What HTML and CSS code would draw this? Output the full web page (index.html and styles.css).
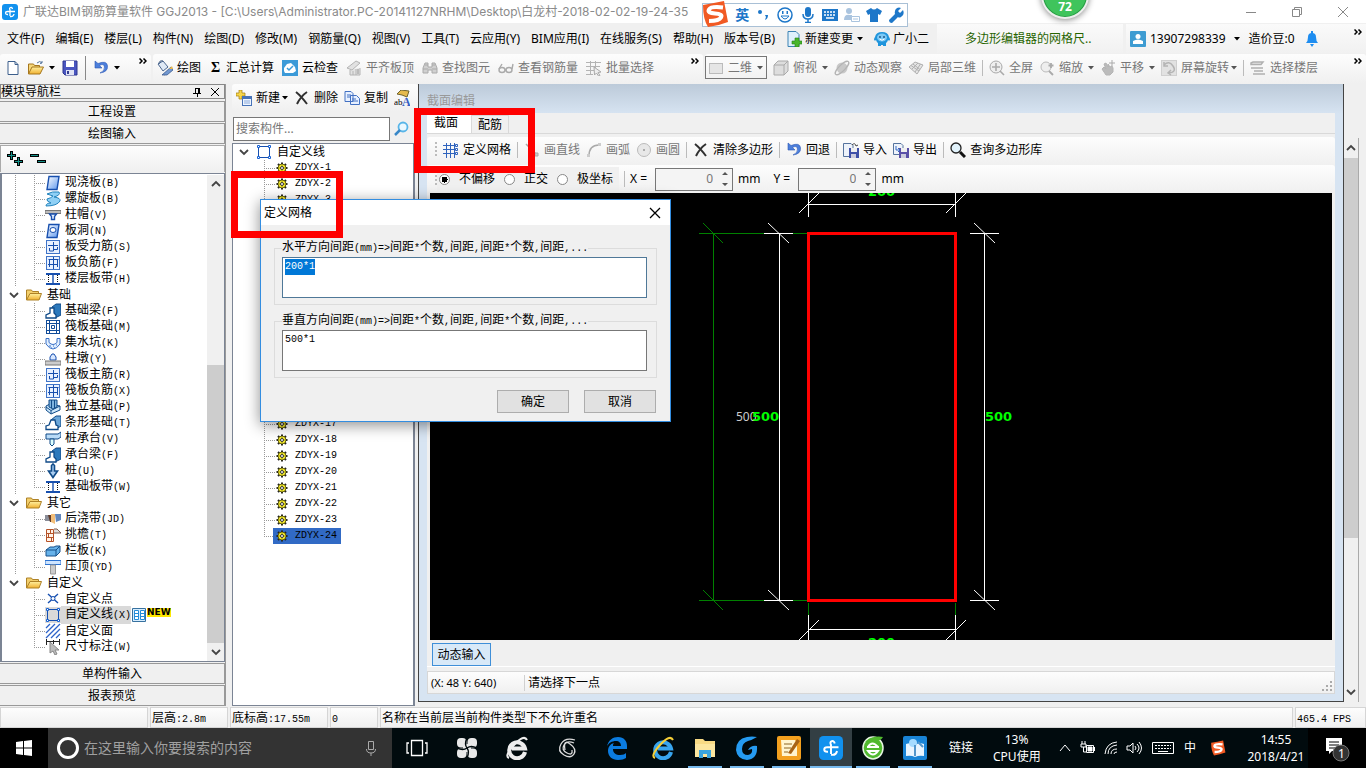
FILE: index.html
```html
<!DOCTYPE html>
<html lang="zh-CN">
<head>
<meta charset="utf-8">
<title>广联达BIM钢筋算量软件 GGJ2013</title>
<link rel="stylesheet" href="styles.css">
</head>
<body>
<svg class="defs" aria-hidden="true">
  <defs>
    <linearGradient id="gBlue" x1="0" y1="0" x2="1" y2="1"><stop offset="0" stop-color="#fff"/><stop offset="1" stop-color="#5d97ee"/></linearGradient>
    <linearGradient id="gGold" x1="0" y1="0" x2="0" y2="1"><stop offset="0" stop-color="#fff0a0"/><stop offset="1" stop-color="#f0b030"/></linearGradient>
  </defs>
  <symbol id="app" viewBox="0 0 16 16"><rect width="16" height="16" rx="3" fill="#1191ee"/><path d="M10.500 5Q10 3 8.500 3.500T8 6v6M13 7.500H5.500Q3.500 7.500 3.500 9T5.500 10.500H6M8 12.500q3.500.5 4-2.500" fill="none" stroke="#fff" stroke-width="1.300"/></symbol>
  <symbol id="down" viewBox="0 0 6 4"><path d="M0 0h6L3 3.500z" fill="currentColor"/></symbol>
  <symbol id="more" viewBox="0 0 8 6"><path d="M0.500 0.500 3 3 .5 5.500M4.500 .5 7 3 4.500 5.500" fill="none" stroke="#000" stroke-width="1.500"/></symbol>
  <symbol id="newdoc" viewBox="0 0 16 16"><path d="M3 1.500h7l3 3V14.500H3z" fill="#fff" stroke="#3d5f8c"/><path d="M10 1.500v3h3" fill="none" stroke="#3d5f8c"/></symbol>
  <symbol id="open" viewBox="0 0 16 16"><path d="M.5 14V4h5l1 1.500h5V7" fill="#f6d77a" stroke="#a5761d"/><path d="M.5 14 4 7h11.500L12 14z" fill="url(#gGold)" stroke="#a5761d"/><path d="M9 3q3-3 5 0l-2 .5M14 3V1" fill="none" stroke="#54749c"/></symbol>
  <symbol id="save" viewBox="0 0 16 16"><path d="M1 1h14v14H3l-2-2z" fill="#4a56c0" stroke="#2c3590"/><path d="M4 1h8v6H4z" fill="#fff"/><path d="M4 10h8v5H4z" fill="#dfe3f5"/><path d="M5 11h2v3H5z" fill="#333d90"/></symbol>
  <symbol id="undo" viewBox="0 0 16 16"><path d="M2 1v7h7L6.500 5.500Q11 3 11.500 7T7 13q8-1 7.500-7T5 3.500z" fill="#4c7fdc" stroke="#2b58b4" stroke-width=".6"/></symbol>
  <symbol id="paint" viewBox="0 0 16 16"><path d="M1 4 6 1l5 6-5 4z" fill="#dfe9f5" stroke="#4b6790"/><path d="M2 4q0-4 4-3M10 12l5-5M7 15l5-3" stroke="#39557d" fill="none"/><path d="M5 15l9-8 2 3-6 5z" fill="#7197d0" stroke="#2e4f84" stroke-width=".7"/><path d="M12 9l3-3 1 3z" fill="#e9b84b"/></symbol>
  <symbol id="cloud" viewBox="0 0 16 16"><rect width="16" height="16" fill="#3b9ad8"/><path d="M2 8 5 4l4-1 4 4 1 4-3 2H3l-1-2z" fill="#fff"/><path d="m5 8 2 2 4-4" fill="none" stroke="#3b9ad8" stroke-width="1.500"/></symbol>
  <symbol id="slab" viewBox="0 0 16 16"><path d="m1 8 9-7 4 2-8 7zM4 10v5h10V8M7 11v4M10 9v6" fill="#e2e2e2" stroke="#b4b4b4"/><path d="M11 9h2v5h-2z" fill="#bbb"/></symbol>
  <symbol id="bino" viewBox="0 0 16 16"><path d="M1 13V8l2-5h3v4h4V3h3l2 5v5h-5v-3H6v3zM3 5h3M10 5h3M1 9h5M10 9h5" fill="#d0d0d0" stroke="#aaa"/></symbol>
  <symbol id="glasses" viewBox="0 0 16 16"><g fill="none" stroke="#aaa" stroke-width="1.400"><ellipse cx="4" cy="10" rx="3" ry="2.500"/><ellipse cx="11" cy="10" rx="3" ry="2.500"/><path d="M7 10h1M1 9l3-5M14 9l1-5"/></g></symbol>
  <symbol id="batch" viewBox="0 0 16 16"><path d="M0 2.500h15M0 6.500h14M0 10.500h8M0 14.500h7M4.500 1v14M9.500 1v7" stroke="#b4b4b4"/><path d="M8 7l7 5-3 .5 2 3-1.500.5-2-3-2 2z" fill="#eee" stroke="#aaa"/></symbol>
  <symbol id="rect2d" viewBox="0 0 16 16"><rect x="1.500" y="3.500" width="13" height="10" fill="#e5e5e5" stroke="#bbb"/></symbol>
  <symbol id="cube" viewBox="0 0 16 16"><path d="M1 5 5 1h10v10l-4 4H1z" fill="#ddd" stroke="#aaa"/><path d="M1 5h10l4-4M11 5v10" fill="none" stroke="#aaa"/></symbol>
  <symbol id="orbit" viewBox="0 0 16 16"><circle cx="8" cy="8" r="5.500" fill="#c8c8c8"/><ellipse cx="8" cy="8" rx="9" ry="3" fill="none" stroke="#b4b4b4" stroke-width="1.300" transform="rotate(-45 8 8)"/></symbol>
  <symbol id="part3d" viewBox="0 0 16 16"><path d="m1 7 6-5 8 3-6 9z" fill="#e4e4e4" stroke="#b0b0b0"/><path d="m3 5.500 8 5.500M5 4l7 5.500M10 3 4 9M12.500 4 7 12" fill="none" stroke="#b0b0b0"/></symbol>
  <symbol id="full" viewBox="0 0 16 16"><circle cx="7" cy="7" r="6" fill="#eee" stroke="#aaa"/><path d="M7 3v8M3 7h8M11 11l4 4" stroke="#aaa" stroke-width="1.600"/></symbol>
  <symbol id="zoomi" viewBox="0 0 16 16"><circle cx="7" cy="7" r="5" fill="#eee" stroke="#bbb"/><path d="m10 11 4 4M12 3v5M9.500 5.500h5" stroke="#aaa" stroke-width="1.800"/></symbol>
  <symbol id="hand" viewBox="0 0 16 16"><path d="M2 9l2-2 2 2-2-5 2-1 2 4V4l2 3 2-1 1 2v4l-3 3H6z" fill="#bbb" stroke="#b4b4b4"/><path d="M12 0v6M9 3h6" stroke="#aaa"/></symbol>
  <symbol id="rot" viewBox="0 0 16 16"><rect x=".5" y=".5" width="15" height="15" fill="#e2e2e2" stroke="#d0d0d0"/><path d="M3 5q5-5 9 1t-4 7M3 2v4h4M10 10l-3 3 3 2" fill="none" stroke="#b4b4b4" stroke-width="1.500"/></symbol>
  <symbol id="floors" viewBox="0 0 16 16"><path d="m1 3 2-1h10l-2 2.500H1zM4 8h9M4 11h9M3 14h12M1 8h3M1 8v0" fill="#e4e4e4" stroke="#b0b0b0" stroke-width="1.500"/></symbol>
  <symbol id="docplus" viewBox="0 0 16 16"><path d="M2 .5h8l3 3v12H2z" fill="#dff0fc" stroke="#3d83b4"/><path d="M9 7h4v3h3v3h-3v3H9v-3H6v-3h3z" fill="#48b62b" stroke="#258014" stroke-width=".6"/></symbol>
  <symbol id="mascot" viewBox="0 0 16 16"><path d="M1 6q1-5 7-5t7 5q1 1 1 3-1 1-2 0-1 3-2 3v3H9v-1H7v1H4v-3q-1 0-2-3-1 1-2 0 0-2 1-3z" fill="#2095dc"/><ellipse cx="8" cy="6.500" rx="5" ry="4" fill="#7cc9f5"/><path d="M6 5v2M10 5v2" stroke="#124a7c" stroke-width="1.300"/><path d="M5.500 8q2.500 2.500 5 0" stroke="#fff" fill="none"/></symbol>
  <symbol id="user" viewBox="0 0 16 16"><rect width="16" height="16" rx="1" fill="#3e9cd2"/><circle cx="8" cy="5.500" r="2.500" fill="#fff"/><path d="M3 13V10q5-3 10 0v3z" fill="#fff"/></symbol>
  <symbol id="bell" viewBox="0 0 16 16"><path d="M2 12q2-2 2-6 0-4 4-4t4 4q0 4 2 6z" fill="#1e8df0"/><path d="M7 0h2v3H7zM6 13h4l-2 3z" fill="#1e8df0"/></symbol>
  <symbol id="plusbox" viewBox="0 0 16 16"><path d="M3 0h3v3h3v3H6v3H3V6H0V3h3z" fill="#f7d64b" stroke="#a17b0b" stroke-width=".7"/><rect x="6.500" y="6.500" width="9" height="9" fill="#eef5ff" stroke="#4773b8"/><path d="M7 8h8" stroke="#4773b8" stroke-width="2"/><path d="M8 11h6M8 13h6" stroke="#89a9dc"/></symbol>
  <symbol id="x" viewBox="0 0 16 16"><path d="M2 2q5 4 11 12M13 2Q7 6 3 14" fill="none" stroke="#303030" stroke-width="2"/></symbol>
  <symbol id="copy" viewBox="0 0 16 16"><path d="M1 1.500h6l2 2v8H1zM6.500 5.500h6l3 3v6h-9z" fill="#e7f0ff" stroke="#4270c2"/><path d="M3 5h4M3 7h3M8 9h4M8 11h6" stroke="#4270c2"/></symbol>
  <symbol id="rename" viewBox="0 0 16 16"><path d="M3 4 7 0l8 1-2 6-5-2z" fill="#e6ba4d" stroke="#6e632e"/><text x="0" y="15" font-size="9" font-family="Liberation Serif">ab</text><text x="8" y="16" font-size="12" font-weight="bold" fill="#345fc4" font-family="Liberation Serif">A</text></symbol>
  <symbol id="search" viewBox="0 0 16 16"><circle cx="9" cy="6" r="4.500" fill="#eaf8ff" stroke="#58b5e8" stroke-width="1.800"/><path d="m6 9-5 5" stroke="#3988c8" stroke-width="2.500"/></symbol>
  <symbol id="searchB" viewBox="0 0 16 16"><circle cx="6" cy="6" r="5" fill="#e2f3fc" stroke="#222" stroke-width="1.300"/><path d="m10 10 5 5" stroke="#111" stroke-width="3"/></symbol>
  <symbol id="grid" viewBox="0 0 16 16"><path d="M0 3.500h15M0 7.500h15M0 11.500h15M3.500 1v15M7.500 1v15M11.500 1v15" stroke="#2f63bd"/><path d="M12.500 2.500h2v2h-2zM12.500 6.500h2v2h-2zM12.500 10.500h2v2h-2z" fill="#fff" stroke="#2f63bd"/></symbol>
  <symbol id="line" viewBox="0 0 16 16"><path d="m2 2 10 10" stroke="#aaa" stroke-width="1.500"/><path d="M11 11h3v3h-3z" fill="#ccc" stroke="#aaa"/></symbol>
  <symbol id="arc" viewBox="0 0 16 16"><path d="M3 14Q3 3 13 3" fill="none" stroke="#aaa" stroke-width="1.500"/><path d="M1 12h3v3H1zM12 1h3v3h-3z" fill="#ccc"/></symbol>
  <symbol id="circ" viewBox="0 0 16 16"><circle cx="8" cy="8" r="6.500" fill="#e8e8e8" stroke="#bbb"/><circle cx="8" cy="8" r="1" fill="#999"/></symbol>
  <symbol id="imp" viewBox="0 0 16 16"><path d="M.5 1.500H8l2 2v11H.5z" fill="#eef3fa" stroke="#56749e"/><path d="M6 6h10v10H6z" fill="#3f50a8"/><path d="M8 6h6v4H8z" fill="#eee"/><path d="M8 12h5v4H8z" fill="#ccd"/><path d="M9 3q3-3 4 1l2-1" fill="none" stroke="#444"/></symbol>
  <symbol id="exp" viewBox="0 0 16 16"><path d="M.5 1.500H8l2 2v9H.5z" fill="#eef3fa" stroke="#56749e"/><path d="M6 6h10v10H6z" fill="#5a50a8"/><path d="M8 6h6v4H8z" fill="#eee"/><path d="M8 12h5v4H8z" fill="#ccd"/><path d="M3 4v4h4M5 6l2 2-2 2" fill="none" stroke="#3568c5"/></symbol>
  <symbol id="folder" viewBox="0 0 16 16"><path d="M.5 13V3h5l1 1.500h6V7" fill="#f3cf6c" stroke="#ad8127"/><path d="M.5 13 4 6.500h11.500L13 13z" fill="url(#gGold)" stroke="#ad8127"/></symbol>
  <symbol id="chev" viewBox="0 0 10 10"><path d="m1 3 4 4 4-4" fill="none" stroke="#444" stroke-width="1.800"/></symbol>
  <symbol id="gear" viewBox="0 0 12 12"><path d="M6 .5v11M.5 6h11M2 2l8 8M10 2l-8 8" stroke="#222" stroke-width="2"/><circle cx="6" cy="6" r="4" fill="#f7ee2c" stroke="#4d4904" stroke-width=".8"/><path d="M6 2v8M2 6h8" stroke="#a39a18"/><circle cx="6" cy="6" r="1.500" fill="#fff" stroke="#333"/></symbol>
  <symbol id="t1" viewBox="0 0 16 16"><path d="M4 1.500h10l-2 13H2z" fill="url(#gBlue)" stroke="#174fae" stroke-width="1.400"/></symbol>
  <symbol id="t2" viewBox="0 0 16 16"><path d="M2 3q5-3 12-2 2 3-5 5 7 1 6 4-3 5-14 5 0-3 5-3-5-2-4-4 4-1 6-3z" fill="#8fd0f5" stroke="#2584bd"/></symbol>
  <symbol id="t3" viewBox="0 0 16 16"><path d="M0 3.500h16v3H0z" fill="#bbb" stroke="#777"/><path d="M4.500 7h7l-2 2.500v3h-3v-3z" fill="#e5f0ff" stroke="#194fae" stroke-width="1.400"/></symbol>
  <symbol id="t4" viewBox="0 0 16 16"><path d="M4 1.500h10l-2 13H2z" fill="url(#gBlue)" stroke="#174fae" stroke-width="1.400"/><ellipse cx="8" cy="7" rx="3" ry="2.500" fill="#fff" stroke="#174fae"/></symbol>
  <symbol id="t5" viewBox="0 0 16 16"><rect x="1.500" y="1.500" width="13" height="13" fill="#e8f1ff" stroke="#3f74c8"/><path d="M3 6.500h3M6 6.500h7M8.500 3v9H4.500V9M9 10.500h3.500V8" fill="none" stroke="#174fae"/></symbol>
  <symbol id="t6" viewBox="0 0 16 16"><rect x="1.500" y="1.500" width="13" height="13" fill="#e8f1ff" stroke="#3f74c8"/><path d="M3.500 4.500h10M3 9.500h10M4.500 5v7M12.500 5v7M8.500 2v12" fill="none" stroke="#174fae"/></symbol>
  <symbol id="t7" viewBox="0 0 16 16"><path d="M1 3h14M1 13h14" stroke="#174fae" stroke-width="2"/><path d="M3.500 4v8M12.500 4v8" stroke="#111" stroke-dasharray="1 1"/><path d="M8 4v8" stroke="#174fae" stroke-width="1.400"/></symbol>
  <symbol id="t8" viewBox="0 0 16 16"><path d="m7 4 4-3h5v11l-6 3z" fill="#2c79bc" stroke="#104b88"/><path d="M1 15V12l4-2V5h4v5l2 2v3z" fill="#fff" stroke="#104b88" stroke-width="1.300"/></symbol>
  <symbol id="t9" viewBox="0 0 16 16"><rect x="1.500" y="1.500" width="13" height="13" fill="#fff" stroke="#104b98"/><path d="M4.500 2v12M11.500 2v12M2 4.500h12M2 11.500h12M6.500 6.500h3v3h-3z" fill="none" stroke="#104b98"/></symbol>
  <symbol id="t10" viewBox="0 0 16 16"><path d="M1 3.500h3v4q4 4 8 0v-4h3V9q-7 10-14 0z" fill="#e3f0ff" stroke="#3970c7"/><path d="M4 11h2M8 11h1M11 10h1M6 13h1M9 13h1" stroke="#3970c7"/></symbol>
  <symbol id="t11" viewBox="0 0 16 16"><path d="M5 9V6l2-3h2l2 3v3z" fill="#d9e8ff" stroke="#174fae"/><path d="M0 10h16v4H0z" fill="#ccc" stroke="#777"/></symbol>
  <symbol id="t13" viewBox="0 0 16 16"><path d="m1 7 4-2 10 2v4l-9 4-5-4z" fill="#cce7fb" stroke="#104b88"/><path d="M4 1h8v7L8 10 4 8z" fill="#7db3df" stroke="#104b88"/><path d="M6.500 1v8M9.500 1v8M1 8l5 3.500v3M6 11.500 15 7" fill="none" stroke="#104b88"/></symbol>
  <symbol id="t14" viewBox="0 0 16 16"><path d="m6 5 5-4h5v10l-5 3z" fill="#6ba6d8" stroke="#104b88"/><path d="M1 14.500V11l3-1 2-5h4l1 5 2 1v3.500z" fill="#fff" stroke="#104b88" stroke-width="1.300"/></symbol>
  <symbol id="t15" viewBox="0 0 16 16"><path d="M1 3h12l3-2v5l-3 2H1z" fill="#b9dbf7" stroke="#104b88"/><path d="M5 8h4v5l-2 2-2-2z" fill="#dff" stroke="#104b88"/></symbol>
  <symbol id="t16" viewBox="0 0 16 16"><path d="M6.500 2.500 8 1l1.500 1.500V8h3L8 14.500 3.500 8h3z" fill="#aacdf0" stroke="#104b88" stroke-width="1.600"/></symbol>
  <symbol id="o1" viewBox="0 0 16 16"><path d="M0 4h6v6H0z" fill="#8a8d98"/><path d="M3 4h4v7H5z" fill="#5e3928"/><path d="M6 3h4v10l-4-2z" fill="#f2bd78"/><path d="M10 3h6v6l-5 2z" fill="#6186bb"/></symbol>
  <symbol id="o2" viewBox="0 0 16 16"><path d="M1.500 2.500h7v12h-7zM1 6.500h8M1 10.500h8M5.500 2v4M3.500 6v4M6.500 10v4" fill="#fff2e7" stroke="#b55228"/><path d="M9 2h3l4 4H9" fill="#ddd" stroke="#805b4c"/></symbol>
  <symbol id="o3" viewBox="0 0 16 16"><path d="m1 7 4-3h4l2-1h4v6l-4 4H1z" fill="#66b2ea" stroke="#17518a"/><path d="M1 7h10l4-4M11 7v6" fill="none" stroke="#17518a"/></symbol>
  <symbol id="o4" viewBox="0 0 16 16"><path d="M0 1.500h16v4H0z" fill="#cfe5ff" stroke="#2d73d0"/><path d="M5.500 6h5v9h-5z" fill="#ccc" stroke="#999"/></symbol>
  <symbol id="c1" viewBox="0 0 16 16"><path d="M3 3 13 12M13 3 3 12" stroke="#164fb0" stroke-width="1.400"/><circle cx="8" cy="7.500" r="2" fill="#fff" stroke="#164fb0"/></symbol>
  <symbol id="c2" viewBox="0 0 16 16"><path d="M2.500 2.500h11v11h-11z" fill="none" stroke="#164fb0"/><path d="M1.500 1.500h2v2h-2zM12.500 1.500h2v2h-2zM1.500 12.500h2v2h-2zM12.500 12.500h2v2h-2z" fill="#fff" stroke="#1761d2"/></symbol>
  <symbol id="c3" viewBox="0 0 16 16"><path d="M1 5 5 1M1 10l9-9M1 15 15 1M6 15l9-9M11 15l4-4" stroke="#2c62c9" stroke-width="1.300"/></symbol>
  <symbol id="c4" viewBox="0 0 16 16"><path d="M1.500 0v6M14.500 0v6M1 2.500h14M8.500 1v4" stroke="#222"/><path d="m5 3 9 8H10l2 4-2 1-2-4-3 2z" fill="#bbb" stroke="#888"/></symbol>
  <symbol id="win" viewBox="0 0 16 16"><path d="m0 2 7-1v6.500H0zM8 1l8-1v7.500H8zM0 8.500h7V15l-7-1zM8 8.500h8V16l-8-1z" fill="#fff"/></symbol>
  <symbol id="ring" viewBox="0 0 24 24"><circle cx="12" cy="12" r="9.500" fill="none" stroke="#fff" stroke-width="3"/></symbol>
  <symbol id="mic" viewBox="0 0 16 16"><path d="M5.500 1.500h5v8h-5zM3.500 9q0 4 4.500 4t4.500-4M8 13v3" fill="none" stroke="#aaa"/></symbol>
  <symbol id="task" viewBox="0 0 24 24"><path d="M6.500 4.500h11v15h-11zM4 7H2v10h2M20 7h2v10h-2" fill="none" stroke="#fff" stroke-width="1.300"/></symbol>
  <symbol id="pin4" viewBox="0 0 24 24"><g fill="#e9e9e9"><rect x="2" y="2" width="9.500" height="9.500" rx="4"/><rect x="12.500" y="2" width="9.500" height="9.500" rx="4"/><rect x="2" y="12.500" width="9.500" height="9.500" rx="4"/><rect x="12.500" y="12.500" width="9.500" height="9.500" rx="4"/><path d="M8 8h8v8H8z"/></g><path d="M12 12Q9 8 12 2M12 12q4-3 10 0M12 12q3 4 0 10M12 12q-4 3-10 0" fill="none" stroke="#010b0e" stroke-width="1.300"/></symbol>
  <symbol id="eie" viewBox="0 0 24 24"><path d="M20 16A8 8 0 1 1 20 12.500H7" fill="none" stroke="currentColor" stroke-width="4"/><path d="M4 22Q-1 20 9 9T22 4" fill="none" stroke="var(--ring)" stroke-width="2"/></symbol>
  <symbol id="swirl" viewBox="0 0 24 24"><path d="M20 4Q10 1 6 8t3 11 10-1-4-10-5 6M19 7Q12 4 9 9t3 8 5-3" fill="none" stroke="#ddd" stroke-width="1.300"/></symbol>
  <symbol id="edge" viewBox="0 0 24 24"><path d="M2 11C3 4 8 1 13 1c6 0 9 4 9 9v3H8c0 4 3 6 7 6 3 0 5-1 6-2v5c-2 1-4 2-8 2-6 0-10-4-10-9 0-4 2-7 6-8-1 1-1 2-1 3h8c0-3-2-5-5-5-4 0-8 2-9 6z" fill="#0b7ce0"/></symbol>
  <symbol id="exf" viewBox="0 0 24 24"><path d="M2 3h8l2 2h10v16H2z" fill="#f8da84"/><path d="M2 8h20v13H2z" fill="#fce69f"/><path d="M6 14h12v8h-4v-4h-4v4H6z" fill="#3aa4de"/></symbol>
  <symbol id="gblue" viewBox="0 0 24 24"><path d="M22 1Q17 4 13 5 7 7 7 13t6 6q5-1 4-6l-4 1q3-5 9-4 1 13-10 14Q2 23 1 14 1 3 12 1q5-1 10 0z" fill="#259bf1"/></symbol>
  <symbol id="note" viewBox="0 0 24 24"><rect width="24" height="24" rx="2" fill="#f3a01e"/><path d="M4 4h14l2 3v13H5z" fill="#fff4ce"/><path d="M7 8h8M7 12h7M7 16h4" stroke="#8c6422"/><path d="m11 17 9-14 3 2-9 13z" fill="#a76316"/></symbol>
  <symbol id="green" viewBox="0 0 24 24"><ellipse cx="12" cy="12" rx="10" ry="11" fill="#50b92e" stroke="#e7f5e2" stroke-width="1.500"/><path d="M4 6Q12-1 22 1q-2 4-8 4" fill="#50b92e"/><path d="M18 11H6M7 15h10q-5 7-10 0zM7 11q4-7 10 0" fill="none" stroke="#fff" stroke-width="2"/></symbol>
  <symbol id="books" viewBox="0 0 24 24"><rect width="24" height="24" rx="2" fill="#1984d6"/><path d="M3 8q5-2 9 1 4-3 9-1v12q-5-1-9 1-4-2-9-1z" fill="#e9f5ff"/><circle cx="10" cy="7" r="4" fill="#a5dbff"/><path d="M12 9v11M15 6l5 5" stroke="#5396cb" stroke-width="2"/></symbol>
  <symbol id="sogou" viewBox="0 0 28 28"><path d="M2 5Q13 3 23 1l4 21q-10 4-20 5Q2 19 2 5z" fill="#f15a24"/><path d="M22 7.500Q10 6 8 9.500t6 4 6 4-12 3.500" fill="none" stroke="#fff" stroke-width="4"/></symbol>
</svg>

<header class="titlebar">
  <svg class="ic"><use href="#app"/></svg>
  <h1>广联达BIM钢筋算量软件 GGJ2013 - [C:\Users\Administrator.PC-20141127NRHM\Desktop\白龙村-2018-02-02-19-24-35</h1>
  <div class="wincontrols">
    <button aria-label="最小化"><svg viewBox="0 0 12 12"><path d="M1 6.500h10"/></svg></button>
    <button aria-label="还原"><svg viewBox="0 0 12 12"><path d="M1.500 3.500h7v7h-7zM3.500 3V1.500h7v7H9"/></svg></button>
    <button aria-label="关闭"><svg viewBox="0 0 12 12"><path d="m1 1 10 10M11 1 1 11"/></svg></button>
  </div>
</header>

<div class="menubar">
  <nav class="menu">
    <button>文件(F)</button><button>编辑(E)</button><button>楼层(L)</button><button>构件(N)</button><button>绘图(D)</button><button>修改(M)</button><button>钢筋量(Q)</button><button>视图(V)</button><button>工具(T)</button><button>云应用(Y)</button><button>BIM应用(I)</button><button>在线服务(S)</button><button>帮助(H)</button><button>版本号(B)</button>
    <button class="tool"><svg class="ic"><use href="#docplus"/></svg>新建变更<svg class="dd"><use href="#down"/></svg></button>
    <button class="tool"><svg class="ic"><use href="#mascot"/></svg>广小二</button>
  </nav>
  <div class="tip"><a href="#">多边形编辑器的网格尺..</a></div>
  <div class="account">
    <button class="tool"><svg class="ic"><use href="#user"/></svg><span class="phone">13907298339</span><svg class="dd"><use href="#down"/></svg></button>
    <span>造价豆:0</span>
    <svg class="ic"><use href="#bell"/></svg>
    <svg class="more"><use href="#more"/></svg>
  </div>
</div>

<div class="toolbars">
  <div class="bar files">
    <button aria-label="新建"><svg class="ic"><use href="#newdoc"/></svg></button>
    <button class="tool" aria-label="打开"><svg class="ic"><use href="#open"/></svg><svg class="dd"><use href="#down"/></svg></button>
    <button aria-label="保存"><svg class="ic"><use href="#save"/></svg></button>
    <i class="sep dark"></i>
    <button class="tool" aria-label="撤销"><svg class="ic"><use href="#undo"/></svg><svg class="dd"><use href="#down"/></svg></button>
    <svg class="more"><use href="#more"/></svg>
  </div>
  <div class="bar draw">
    <button class="tool"><svg class="ic"><use href="#paint"/></svg>绘图</button>
    <button class="tool"><b class="sigma">Σ</b>汇总计算</button>
    <button class="tool"><svg class="ic"><use href="#cloud"/></svg>云检查</button>
    <button class="tool off"><svg class="ic"><use href="#slab"/></svg>平齐板顶</button>
    <button class="tool off"><svg class="ic"><use href="#bino"/></svg>查找图元</button>
    <button class="tool off"><svg class="ic"><use href="#glasses"/></svg>查看钢筋量</button>
    <button class="tool off"><svg class="ic"><use href="#batch"/></svg>批量选择</button>
    <svg class="more"><use href="#more"/></svg>
  </div>
  <div class="bar view">
    <button class="tool off combo"><svg class="ic"><use href="#rect2d"/></svg>二维<svg class="dd"><use href="#down"/></svg></button>
    <button class="tool off"><svg class="ic"><use href="#cube"/></svg>俯视<svg class="dd"><use href="#down"/></svg></button>
    <button class="tool off"><svg class="ic"><use href="#orbit"/></svg>动态观察</button>
    <button class="tool off"><svg class="ic"><use href="#part3d"/></svg>局部三维</button>
    <i class="sep"></i>
    <button class="tool off"><svg class="ic"><use href="#full"/></svg>全屏</button>
    <button class="tool off"><svg class="ic"><use href="#zoomi"/></svg>缩放<svg class="dd"><use href="#down"/></svg></button>
    <button class="tool off"><svg class="ic"><use href="#hand"/></svg>平移<svg class="dd"><use href="#down"/></svg></button>
    <button class="tool off tight"><svg class="ic"><use href="#rot"/></svg>屏幕旋转<svg class="dd"><use href="#down"/></svg></button>
    <i class="sep"></i>
    <button class="tool off"><svg class="ic"><use href="#floors"/></svg>选择楼层</button>
    <svg class="more"><use href="#more"/></svg>
  </div>
</div>

<main class="workspace">
  <aside class="nav">
    <header class="navhead"><h2>模块导航栏</h2>
      <svg class="mini" viewBox="0 0 10 10"><path d="M3.500 1v5M1 6.500h8M5.500 7v3M3 1.500h4M6.500 1v5M7.500 1v5" fill="none" stroke="#000"/></svg>
      <svg class="mini" viewBox="0 0 10 10"><path d="m1 1 8 8M9 1 1 9" fill="none" stroke="#000"/></svg>
    </header>
    <button class="section">工程设置</button>
    <button class="section">绘图输入</button>
    <div class="expand">
      <svg viewBox="0 0 40 16"><g stroke="#000" stroke-width="3"><path d="M0 4.500h9M4.500 0v9M7 10.500h9M11.500 6v9M23 4.500h9M30 10.500h9"/></g><g stroke="#149088"><path d="M1 4.500h7M4.500 1v7M8 10.500h7M11.500 7v7M24 4.500h7M31 10.500h7"/></g></svg>
    </div>
    <div class="treebox">
      <ul class="tree">
        <li><i class="trunk"></i><i class="branch"></i><svg class="ic"><use href="#t1"/></svg><span>现浇板<tt>(B)</tt></span></li>
        <li><i class="trunk"></i><i class="branch"></i><svg class="ic"><use href="#t2"/></svg><span>螺旋板<tt>(B)</tt></span></li>
        <li><i class="trunk"></i><i class="branch"></i><svg class="ic"><use href="#t3"/></svg><span>柱帽<tt>(V)</tt></span></li>
        <li><i class="trunk"></i><i class="branch"></i><svg class="ic"><use href="#t4"/></svg><span>板洞<tt>(N)</tt></span></li>
        <li><i class="trunk"></i><i class="branch"></i><svg class="ic"><use href="#t5"/></svg><span>板受力筋<tt>(S)</tt></span></li>
        <li><i class="trunk"></i><i class="branch"></i><svg class="ic"><use href="#t6"/></svg><span>板负筋<tt>(F)</tt></span></li>
        <li><i class="trunk"></i><i class="branch last"></i><svg class="ic"><use href="#t7"/></svg><span>楼层板带<tt>(H)</tt></span></li>
        <li class="group"><svg class="chev"><use href="#chev"/></svg><svg class="ic"><use href="#folder"/></svg><span>基础</span></li>
        <li><i class="trunk"></i><i class="branch"></i><svg class="ic"><use href="#t8"/></svg><span>基础梁<tt>(F)</tt></span></li>
        <li><i class="trunk"></i><i class="branch"></i><svg class="ic"><use href="#t9"/></svg><span>筏板基础<tt>(M)</tt></span></li>
        <li><i class="trunk"></i><i class="branch"></i><svg class="ic"><use href="#t10"/></svg><span>集水坑<tt>(K)</tt></span></li>
        <li><i class="trunk"></i><i class="branch"></i><svg class="ic"><use href="#t11"/></svg><span>柱墩<tt>(Y)</tt></span></li>
        <li><i class="trunk"></i><i class="branch"></i><svg class="ic"><use href="#t5"/></svg><span>筏板主筋<tt>(R)</tt></span></li>
        <li><i class="trunk"></i><i class="branch"></i><svg class="ic"><use href="#t6"/></svg><span>筏板负筋<tt>(X)</tt></span></li>
        <li><i class="trunk"></i><i class="branch"></i><svg class="ic"><use href="#t13"/></svg><span>独立基础<tt>(P)</tt></span></li>
        <li><i class="trunk"></i><i class="branch"></i><svg class="ic"><use href="#t14"/></svg><span>条形基础<tt>(T)</tt></span></li>
        <li><i class="trunk"></i><i class="branch"></i><svg class="ic"><use href="#t15"/></svg><span>桩承台<tt>(V)</tt></span></li>
        <li><i class="trunk"></i><i class="branch"></i><svg class="ic"><use href="#t8"/></svg><span>承台梁<tt>(F)</tt></span></li>
        <li><i class="trunk"></i><i class="branch"></i><svg class="ic"><use href="#t16"/></svg><span>桩<tt>(U)</tt></span></li>
        <li><i class="trunk"></i><i class="branch last"></i><svg class="ic"><use href="#t7"/></svg><span>基础板带<tt>(W)</tt></span></li>
        <li class="group"><svg class="chev"><use href="#chev"/></svg><svg class="ic"><use href="#folder"/></svg><span>其它</span></li>
        <li><i class="trunk"></i><i class="branch"></i><svg class="ic"><use href="#o1"/></svg><span>后浇带<tt>(JD)</tt></span></li>
        <li><i class="trunk"></i><i class="branch"></i><svg class="ic"><use href="#o2"/></svg><span>挑檐<tt>(T)</tt></span></li>
        <li><i class="trunk"></i><i class="branch"></i><svg class="ic"><use href="#o3"/></svg><span>栏板<tt>(K)</tt></span></li>
        <li><i class="trunk"></i><i class="branch last"></i><svg class="ic"><use href="#o4"/></svg><span>压顶<tt>(YD)</tt></span></li>
        <li class="group"><svg class="chev"><use href="#chev"/></svg><svg class="ic"><use href="#folder"/></svg><span>自定义</span></li>
        <li><i class="trunk none"></i><i class="branch"></i><svg class="ic"><use href="#c1"/></svg><span>自定义点</span></li>
        <li><i class="trunk none"></i><i class="branch"></i><svg class="ic sel"><use href="#c2"/></svg><span class="sel">自定义线<tt>(X)</tt></span>
          <svg class="ic" viewBox="0 0 16 16"><path d="M1.500 1.500h13v13h-13z" fill="#d6edff" stroke="#37719f"/><path d="M3.500 3.500h4v9h-4zM9.500 3.500h4v9h-4zM4 6.500h3M4 9.500h3M10 6.500h3M10 9.500h3" fill="#fff" stroke="#248bd8"/></svg><b class="new">NEW</b></li>
        <li><i class="trunk none"></i><i class="branch"></i><svg class="ic"><use href="#c3"/></svg><span>自定义面</span></li>
        <li><i class="trunk none"></i><i class="branch last"></i><svg class="ic"><use href="#c4"/></svg><span>尺寸标注<tt>(W)</tt></span></li>
      </ul>
      <div class="vscroll"><svg class="chev up"><use href="#chev"/></svg><i class="thumb"></i><svg class="chev"><use href="#chev"/></svg></div>
    </div>
    <button class="section">单构件输入</button>
    <button class="section">报表预览</button>
  </aside>

  <section class="parts">
    <div class="bar partbar">
      <button class="tool tight"><svg class="ic"><use href="#plusbox"/></svg>新建<svg class="dd"><use href="#down"/></svg></button>
      <button class="tool"><svg class="ic"><use href="#x"/></svg>删除</button>
      <button class="tool"><svg class="ic"><use href="#copy"/></svg>复制</button>
      <button aria-label="重命名"><svg class="ic"><use href="#rename"/></svg></button>
    </div>
    <div class="find"><input type="text" placeholder="搜索构件..." aria-label="搜索构件"><button aria-label="搜索"><svg class="ic"><use href="#search"/></svg></button></div>
    <ul class="tree list">
      <li class="group"><svg class="chev"><use href="#chev"/></svg><svg class="ic"><use href="#c2"/></svg><span>自定义线</span></li>
      <li><i class="branch"></i><svg class="gear"><use href="#gear"/></svg><tt>ZDYX-1</tt></li>
      <li><i class="branch"></i><svg class="gear"><use href="#gear"/></svg><tt>ZDYX-2</tt></li>
      <li><i class="branch"></i><svg class="gear"><use href="#gear"/></svg><tt>ZDYX-3</tt></li>
      <li><i class="branch"></i><svg class="gear"><use href="#gear"/></svg><tt>ZDYX-4</tt></li>
      <li><i class="branch"></i><svg class="gear"><use href="#gear"/></svg><tt>ZDYX-5</tt></li>
      <li><i class="branch"></i><svg class="gear"><use href="#gear"/></svg><tt>ZDYX-6</tt></li>
      <li><i class="branch"></i><svg class="gear"><use href="#gear"/></svg><tt>ZDYX-7</tt></li>
      <li><i class="branch"></i><svg class="gear"><use href="#gear"/></svg><tt>ZDYX-8</tt></li>
      <li><i class="branch"></i><svg class="gear"><use href="#gear"/></svg><tt>ZDYX-9</tt></li>
      <li><i class="branch"></i><svg class="gear"><use href="#gear"/></svg><tt>ZDYX-10</tt></li>
      <li><i class="branch"></i><svg class="gear"><use href="#gear"/></svg><tt>ZDYX-11</tt></li>
      <li><i class="branch"></i><svg class="gear"><use href="#gear"/></svg><tt>ZDYX-12</tt></li>
      <li><i class="branch"></i><svg class="gear"><use href="#gear"/></svg><tt>ZDYX-13</tt></li>
      <li><i class="branch"></i><svg class="gear"><use href="#gear"/></svg><tt>ZDYX-14</tt></li>
      <li><i class="branch"></i><svg class="gear"><use href="#gear"/></svg><tt>ZDYX-15</tt></li>
      <li><i class="branch"></i><svg class="gear"><use href="#gear"/></svg><tt>ZDYX-16</tt></li>
      <li><i class="branch"></i><svg class="gear"><use href="#gear"/></svg><tt>ZDYX-17</tt></li>
      <li><i class="branch"></i><svg class="gear"><use href="#gear"/></svg><tt>ZDYX-18</tt></li>
      <li><i class="branch"></i><svg class="gear"><use href="#gear"/></svg><tt>ZDYX-19</tt></li>
      <li><i class="branch"></i><svg class="gear"><use href="#gear"/></svg><tt>ZDYX-20</tt></li>
      <li><i class="branch"></i><svg class="gear"><use href="#gear"/></svg><tt>ZDYX-21</tt></li>
      <li><i class="branch"></i><svg class="gear"><use href="#gear"/></svg><tt>ZDYX-22</tt></li>
      <li><i class="branch"></i><svg class="gear"><use href="#gear"/></svg><tt>ZDYX-23</tt></li>
      <li><i class="branch last"></i><span class="picked"><svg class="gear"><use href="#gear"/></svg><tt>ZDYX-24</tt></span></li>
    </ul>
  </section>

  <section class="editor">
    <h2>截面编辑</h2>
    <div class="client">
      <div class="tabs"><button class="on">截面</button><button>配筋</button></div>
      <div class="bar edbar">
        <i class="grip"></i>
        <button class="tool"><svg class="ic"><use href="#grid"/></svg>定义网格</button>
        <i class="sep"></i>
        <button class="tool off"><svg class="ic"><use href="#line"/></svg>画直线</button>
        <button class="tool off"><svg class="ic"><use href="#arc"/></svg>画弧</button>
        <button class="tool off"><svg class="ic"><use href="#circ"/></svg>画圆</button>
        <i class="sep"></i>
        <button class="tool"><svg class="ic"><use href="#x"/></svg>清除多边形</button>
        <i class="sep"></i>
        <button class="tool"><svg class="ic"><use href="#undo"/></svg>回退</button>
        <i class="sep"></i>
        <button class="tool"><svg class="ic"><use href="#imp"/></svg>导入</button>
        <button class="tool"><svg class="ic"><use href="#exp"/></svg>导出</button>
        <i class="sep"></i>
        <button class="tool"><svg class="ic"><use href="#searchB"/></svg>查询多边形库</button>
      </div>
      <div class="bar offsets">
        <i class="grip"></i>
        <div class="radios">
          <label><input type="radio" name="offset" checked>不偏移</label>
          <label><input type="radio" name="offset">正交</label>
          <label><input type="radio" name="offset">极坐标</label>
        </div>
        <i class="sep"></i>
        <label class="axis" for="dx">X =</label>
        <span class="spin"><input id="dx" type="text" value="0"><svg viewBox="0 0 8 16"><path d="M1 4h6L4 1zM1 12h6l-3 3z" fill="#555"/></svg></span>
        <span class="unit">mm</span>
        <label class="axis" for="dy">Y =</label>
        <span class="spin"><input id="dy" type="text" value="0"><svg viewBox="0 0 8 16"><path d="M1 4h6L4 1zM1 12h6l-3 3z" fill="#555"/></svg></span>
        <span>mm</span>
      </div>
      <div class="canvas">
        <svg width="902" height="447">
          <g fill="none" stroke="#008000">
            <path d="M283.500 40v368M269 40.500h110M269 407.500h110M273 30l20 20M273 397l20 20M378.500 410v12M525.500 410v12"/>
          </g>
          <g fill="none" stroke="#fff">
            <path d="M378.500 0v24M525.500 0v24M378 11.500h148M369 20l20-20M516 20l20-20"/>
            <path d="M349.500 40v368M334 40.500h29M334 407.500h29M338 30l21 20M338 397l21 20"/>
            <path d="M554.500 40v368M540 40.500h29M540 407.500h29M544 30l21 20M544 397l21 20"/>
            <path d="M378.500 422v25M525.500 422v25M378 436.500h148M369 447l20-20M516 447l20-20"/>
          </g>
          <rect x="378.500" y="40.500" width="147" height="367" fill="none" stroke="#f00" stroke-width="3"/>
          <text class="gray" x="306" y="228">500</text>
          <g class="dim"><text x="322" y="228">500</text><text x="555" y="228">500</text><text x="438" y="3">200</text><text x="438" y="454">200</text></g>
        </svg>
      </div>
      <div class="dyn"><button>动态输入</button></div>
      <div class="edstatus"><span class="xy">(X: 48 Y: 640)</span><span class="hint">请选择下一点</span>
        <svg viewBox="0 0 12 12"><path d="M8 0h2v2H8zM4 4h2v2H4zM8 4h2v2H8zM0 8h2v2H0zM4 8h2v2H4zM8 8h2v2H8z" fill="#aaa"/></svg></div>
    </div>
  </section>

  <div class="mdiedge">
    <div class="vscroll"><svg class="chev up"><use href="#chev"/></svg><i class="thumb"></i><svg class="chev"><use href="#chev"/></svg></div>
  </div>
</main>

<footer class="status">
  <span class="s1"></span><span class="s2">层高<tt>:2.8m</tt></span><span class="s3">底标高<tt>:17.55m</tt></span><span class="s4"><tt>0</tt></span><span class="s5">名称在当前层当前构件类型下不允许重名</span><span class="s6"><tt>465.4 FPS</tt></span>
</footer>

<div class="taskbar">
  <button class="start" aria-label="开始"><svg class="ic"><use href="#win"/></svg></button>
  <label class="cortana"><svg class="tic"><use href="#ring"/></svg><input type="text" placeholder="在这里输入你要搜索的内容"><svg class="ic"><use href="#mic"/></svg></label>
  <div class="apps wideapps">
    <button><svg class="tic"><use href="#task"/></svg></button>
    <button><svg class="tic"><use href="#pin4"/></svg></button>
    <button><svg class="tic white"><use href="#eie"/></svg></button>
    <button><svg class="tic"><use href="#swirl"/></svg></button>
    <button><svg class="tic"><use href="#edge"/></svg></button>
  </div>
  <div class="apps">
    <button><svg class="tic ie"><use href="#eie"/></svg></button>
    <button class="run"><svg class="tic"><use href="#exf"/></svg></button>
    <button class="run"><svg class="tic"><use href="#gblue"/></svg></button>
    <button class="run"><svg class="tic"><use href="#note"/></svg></button>
    <button class="run active"><svg class="tic"><use href="#app"/></svg></button>
    <button class="run"><svg class="tic"><use href="#green"/></svg></button>
    <button class="run"><svg class="tic"><use href="#books"/></svg></button>
  </div>
  <span class="links">链接</span>
  <span class="two cpu">13%<br>CPU使用</span>
  <div class="tray">
    <svg viewBox="0 0 16 16"><path d="m3 11 5-6 5 6"/></svg>
    <svg viewBox="0 0 16 16"><path d="M6.500 5.500h7v7h-7zM14.500 7v4M2 1v3M5 1v3M1 4h5v3H1zM3.500 7v5H6"/><path d="M8 7h4v4H8z" fill="#fff"/></svg>
    <svg viewBox="0 0 16 16"><path d="M2 14Q3 3 14 2M5 14q0-8 9-9M8 14q0-5 6-5M11 14q0-2 3-2"/></svg>
    <svg viewBox="0 0 16 16"><path d="M1 6h3l3-3v10l-3-3H1zM9 6q2 2 0 4M11 4q4 4 0 8M13 2q5 6 0 12"/></svg>
    <svg class="kb" viewBox="0 0 24 16"><path d="M1.500 2.500h21v11h-21z"/><path d="M4 5.500h16M4 8.500h16" stroke-dasharray="2 1"/><path d="M7 11.500h10"/></svg>
    <span>中</span>
    <svg><use href="#sogou"/></svg>
  </div>
  <span class="two clock">14:55<br>2018/4/21</span>
  <button class="notes" aria-label="通知"><svg viewBox="0 0 28 28"><path d="M3 4h16v13H9l-3 3v-3H3z" fill="#fff"/><path d="M6 8h10M6 11h10M6 14h7" stroke="#000"/><circle cx="18" cy="19" r="8" fill="#333" stroke="#777"/><text x="15" y="24" fill="#fff" font-size="12">1</text></svg></button>
</div>

<div class="ime">
  <svg class="logo"><use href="#sogou"/></svg>
  <b>英</b>
  <svg viewBox="0 0 16 16"><circle cx="5" cy="5" r="2"/><path d="M10 8h3q0 4-3 5l1-3z"/></svg>
  <svg viewBox="0 0 16 16"><circle cx="8" cy="8" r="7" fill="none" stroke="#1d77c9" stroke-width="1.500"/><path d="M5 4h1.500v3H5zM9.500 4H11v3H9.500z"/><path d="M4 9q4 6 8 0z" fill="#fff" stroke="#1d77c9"/></svg>
  <svg viewBox="0 0 16 16"><rect x="5" y="0" width="6" height="10" rx="3"/><path d="M3 7q0 5 5 5t5-5M8 12v4M5 15.500h6" fill="none" stroke="#1d77c9" stroke-width="1.500"/></svg>
  <svg viewBox="0 0 16 16"><path d="M0 2h16v12H0z"/><path d="M2 5h12M2 8h12" stroke="#fff" stroke-width="1.500" stroke-dasharray="2 1"/><path d="M4 11h8" stroke="#fff" stroke-width="1.500"/></svg>
  <svg viewBox="0 0 16 16" class="pale"><circle cx="5" cy="4" r="3"/><path d="M0 13q0-6 6-5h2v5z"/><path d="M7.500 9.500h8v5h-8z" fill="#fff" stroke="#aac4df"/><path d="M9 12h5" stroke="#aac4df"/></svg>
  <svg viewBox="0 0 16 16"><path d="m0 4 5-3q3 3 6 0l5 3-2 4-2-1v8H4V7L2 8z"/></svg>
  <svg viewBox="0 0 16 16"><path d="m1 13 6-6q-1-4 2-6 2-1 4 0l-3 3 2 2 3-3q2 5-2 7-2 1-3 0l-6 6q-3 0-3-3z"/></svg>
</div>
<div class="ball">72</div>

<div class="dialog" role="dialog" aria-labelledby="dlg">
  <header><h2 id="dlg">定义网格</h2><button aria-label="关闭"><svg viewBox="0 0 12 12"><path d="m1 1 10 10M11 1 1 11" stroke="#000" stroke-width="1.300"/></svg></button></header>
  <div class="fields">
    <fieldset><legend><label for="hgap">水平方向间距<tt>(mm)=&gt;</tt>间距<tt>*</tt>个数<tt>,</tt>间距<tt>,</tt>间距<tt>*</tt>个数<tt>,</tt>间距<tt>,...</tt></label></legend><textarea id="hgap" class="focus" spellcheck="false">200*1</textarea></fieldset>
    <fieldset><legend><label for="vgap">垂直方向间距<tt>(mm)=&gt;</tt>间距<tt>*</tt>个数<tt>,</tt>间距<tt>,</tt>间距<tt>*</tt>个数<tt>,</tt>间距<tt>,...</tt></label></legend><textarea id="vgap" spellcheck="false">500*1</textarea></fieldset>
    <div class="actions"><button>确定</button><button>取消</button></div>
  </div>
</div>
<div class="mark mark-tool"></div>
<div class="mark mark-title"></div>
<script src="app.js"></script>
</body>
</html>
```

FILE: styles.css
```css
* { box-sizing: border-box; }
body {
  margin: 0; height: 100vh; display: flex; flex-direction: column; overflow: hidden; position: relative;
  background: #f0f0f0; color: #000;
  font: 12px/16px "Noto Sans", "Noto Sans CJK SC", sans-serif;
}
button, input, textarea { font: inherit; color: inherit; margin: 0; }
button { border: 0; background: none; padding: 0; white-space: nowrap; }
h1, h2, ul { margin: 0; padding: 0; font: inherit; list-style: none; }
tt { font: 10px/16px "Liberation Mono", monospace; }
svg { display: block; flex: none; }
.defs { position: absolute; width: 0; height: 0; }
.ic { width: 16px; height: 16px; }
.tic { width: 24px; height: 24px; }
.dd { width: 6px; height: 4px; margin-left: 1px; }
.more { width: 8px; height: 6px; margin: 0 4px 14px auto; }
.chev { width: 10px; height: 10px; }
.chev.up { transform: rotate(180deg); }
.tool { display: flex; align-items: center; gap: 4px; }
.tool.tight .dd { margin-left: -2px; }
.off { color: #777; }
.sep { width: 1px; height: 16px; background: #bbb; flex: none; }
.sep.dark { height: 24px; background: #888; }
.bar { display: flex; align-items: center; background: linear-gradient(#fdfdfd, #f0f0f0); border-radius: 3px; }

.titlebar { height: 23px; flex: none; display: flex; align-items: center; background: #fff; padding-left: 2px; gap: 5px; }
.titlebar h1 { color: #8a8a8a; flex: 1; white-space: nowrap; font: 12px/20px Inter, "Noto Sans CJK SC", sans-serif; }
.wincontrols { display: flex; }
.wincontrols button { width: 46px; height: 20px; display: grid; place-items: center; }
.wincontrols svg { width: 12px; height: 12px; fill: none; stroke: #888; }

.menubar { height: 31px; flex: none; display: flex; align-items: center; gap: 3px; }
.menu { display: flex; gap: 11px; padding-left: 7px; width: 934px; }
.menu .tool { gap: 3px; }
.tip { width: 186px; height: 29px; padding: 7px 28px; background: linear-gradient(#fafafa, #f1f1f1); }
.tip a { color: #276400; text-decoration: none; white-space: nowrap; }
.account { flex: 1; height: 29px; display: flex; align-items: center; gap: 9px; padding-left: 4px; background: linear-gradient(#fafafa, #f1f1f1); }
.account .dd { margin-left: 4px; }

.toolbars { height: 30px; flex: none; display: flex; gap: 2px; }
.toolbars .bar { height: 29px; padding-bottom: 2px; }
.files { width: 151px; padding-left: 5px; gap: 7px; }
.draw { width: 550px; padding-left: 4px; gap: 8px; }
.sigma { font: bold 14px/16px "Liberation Serif", serif; width: 13px; }
.view { flex: 1; gap: 6px; }
.combo { border: 1px solid #777; height: 23px; width: 62px; padding-left: 2px; }
.view .dd { color: #555; }

.workspace { flex: 1; min-height: 0; display: flex; }
.nav { width: 226px; display: flex; flex-direction: column; border-right: 1px solid #999; gap: 1px; }
.navhead { height: 15px; border: 1px solid #888; display: flex; align-items: center; gap: 8px; padding-right: 4px; margin-bottom: 1px; flex: none; }
.navhead h2 { flex: 1; }
.mini { width: 10px; height: 10px; }
.section { height: 21px; border: 1px solid #999; border-width: 1px 1px 1px 0; background: #f0f0f0; flex: none; }
.expand { height: 27px; flex: none; background: linear-gradient(#fdfdfd, #f0f0f0); border: 1px solid #aaa; border-bottom: 0; padding: 5px 6px; }
.expand svg { width: 40px; height: 16px; }
.treebox { flex: 1; min-height: 0; display: flex; background: #fff; border: 1px solid #7b8494; border-left-width: 2px; padding-top: 1px; }
.tree { flex: 1; overflow: hidden; }
.tree li { height: 16px; display: flex; align-items: center; padding-left: 13px; white-space: nowrap; }
.tree .group { padding-left: 7px; }
.tree .group .ic { margin: 0 5px 0 7px; }
.tree li > span { padding-left: 4px; }
.tree .group > span { padding-left: 0; }
.trunk { width: 19px; height: 16px; background: repeating-linear-gradient(#999 0 1px, transparent 1px 2px) 0 0 / 1px 100% no-repeat; }
.trunk.none { background: none; }
.branch {
  width: 11px; height: 16px; flex: none;
  background: repeating-linear-gradient(#999 0 1px, transparent 1px 2px) 0 0 / 1px 100% no-repeat,
    repeating-linear-gradient(90deg, #999 0 1px, transparent 1px 2px) 0 8px / 100% 1px no-repeat;
}
.branch.last { background-size: 1px 8px, 100% 1px; }
.sel { background: #d9d9d9; }
.new { font: bold 9px/9px "DejaVu Sans", sans-serif; background: #ffe600; margin-bottom: 6px; }
.vscroll { width: 17px; background: #f0f0f0; display: flex; flex-direction: column; align-items: center; padding: 4px 0; }
.vscroll .thumb { width: 100%; background: #cdcdcd; }
.treebox .thumb { flex: 1; }
.treebox .vscroll .up { margin-bottom: 176px; }
.treebox .vscroll .chev:last-child { margin-top: 4px; }

.parts { width: 192px; padding-left: 6px; display: flex; flex-direction: column; }
.partbar { height: 27px; padding-left: 4px; gap: 6px; overflow: hidden; flex: none; }
.find { display: flex; align-items: center; height: 27px; margin-top: 5px; gap: 4px; flex: none; padding: 0 0 2px 1px; }
.find input { width: 157px; height: 24px; border: 1px solid #777; border-radius: 0; padding: 0 2px; background: #fff; }
.find input::placeholder { color: #777; opacity: 1; }
.list { background: #fff; border: 1px solid #7b8494; border-right-width: 2px; margin-right: 3px; }
.list .group { padding-left: 6px; }
.list li { padding-left: 31px; }
.gear { width: 12px; height: 12px; margin-right: 7px; }
.list .branch + .gear { margin-left: 1px; }
.list .picked { display: flex; align-items: center; background: #316ac5; height: 16px; }
.list li > .picked { padding: 0 4px 0 3px; margin-left: -2px; }

.editor { flex: 1; min-width: 0; margin-bottom: 4px; border: 1px solid #444; border-top: 0; background: linear-gradient(#bccad9, #d7e4f2 30px); padding: 0 8px 7px; display: flex; flex-direction: column; }
.editor > h2 { height: 29px; color: #999; padding-top: 9px; flex: none; }
.client { flex: 1; min-height: 0; display: flex; flex-direction: column; background: #f0f0f0; }
.tabs { height: 21px; display: flex; align-items: end; border-bottom: 1px solid #d9d9d9; margin-bottom: 3px; flex: none; }
.tabs button { width: 38px; height: 18px; border: 1px solid #d9d9d9; border-bottom: 0; }
.tabs .on { width: 44px; height: 20px; background: #fff; border: 0; padding-right: 6px; }
.edbar { height: 28px; padding: 0 0 2px 8px; gap: 6px; flex: none; }
.grip { width: 2px; height: 16px; flex: none; background: repeating-linear-gradient(#bbb 0 2px, transparent 2px 4px); }
.offsets { height: 28px; padding-left: 8px; gap: 5px; flex: none; }
.radios { display: flex; gap: 9px; margin-left: -5px; width: 182px; padding: 4px 2px; background: #f0f0f0; }
.radios label { display: flex; align-items: center; gap: 9px; white-space: nowrap; }
.radios input { appearance: none; width: 11px; height: 11px; border: 1px solid #888; border-radius: 50%; background: #fff; }
.radios input:checked { background: radial-gradient(circle, #000 0 3px, #fff 3px); }
.axis { width: 20px; white-space: nowrap; }
.spin { width: 78px; height: 23px; border: 1px solid #777; background: #f4f4f4; display: flex; align-items: center; padding-right: 3px; }
.spin input { width: 100%; min-width: 0; flex: 1; border: 0; background: none; text-align: right; color: #777; padding: 0 8px 0 0; }
.spin svg { width: 8px; height: 16px; }
.unit { margin-right: 8px; }
.canvas { flex: 1; min-height: 0; background: #000; margin: 0 3px; overflow: hidden; }
.canvas .dim { font: bold 13px "DejaVu Sans", sans-serif; fill: #0f0; }
.canvas .gray { font: 12px "Noto Sans", sans-serif; fill: #ccc; }
.dyn { height: 27px; flex: none; padding: 3px 5px 0; border-bottom: 1px solid #fff; }
.dyn button { height: 23px; width: 59px; border: 1px solid #3f8fd8; background: #d8e9f8; }
.edstatus { height: 23px; margin-top: 4px; flex: none; display: flex; align-items: center; border: 1px solid #d7d7d7; background: linear-gradient(#fdfdfd, #f0f0f0); }
.xy { width: 97px; padding-left: 3px; border-right: 1px solid #d0d0d0; font-size: 11px; }
.hint { flex: 1; padding-left: 3px; }
.edstatus svg { width: 12px; height: 12px; margin-top: 8px; }

.mdiedge { width: 22px; display: flex; padding: 54px 7px 4px 0; }
.mdiedge .vscroll { flex: 1; border-right: 1px solid #aaa; padding: 5px 0; }
.mdiedge .thumb { height: 380px; margin: 5px 0 auto; }

.status { height: 22px; flex: none; display: flex; gap: 2px; padding-top: 1px; }
.status span { border: 1px solid #d5d5d5; background: linear-gradient(#fdfdfd, #f0f0f0); padding: 2px 1px; white-space: nowrap; }
.status .s1 { width: 148px; }
.status .s2 { width: 78px; }
.status .s3 { width: 98px; }
.status .s4 { width: 48px; }
.status .s5 { flex: 1; }
.status .s6 { width: 71px; }

.taskbar { height: 40px; flex: none; display: flex; align-items: center; background: #010b0e; color: #fff; }
.start { width: 48px; display: grid; place-items: center; background: #000; height: 40px; }
.cortana { width: 344px; height: 40px; background: #333; display: flex; align-items: center; padding: 0 13px 0 8px; gap: 4px; }
.cortana input { flex: 1; min-width: 0; border: 0; background: none; font-size: 14px; padding: 0; }
.cortana input::placeholder { color: #a0a0a0; opacity: 1; }
.apps { display: flex; }
.apps button { width: 42px; height: 40px; display: grid; place-items: center; }
.wideapps button { width: 50px; }
.apps .run { background: linear-gradient(#76b9ed, #76b9ed) center bottom / 34px 2px no-repeat; }
.apps .active { background: linear-gradient(#76b9ed, #76b9ed) center bottom / 100% 2px no-repeat #333f44; }
.white { color: #eee; --ring: #eee; }
.ie { color: #38a5ee; --ring: #f6cf38; }
.links { margin: 0 20px 0 13px; }
.two { text-align: center; line-height: 17px; white-space: nowrap; }
.cpu { width: 47px; margin-right: 17px; }
.tray { flex: 1; display: flex; align-items: center; gap: 7px; }
.tray svg { width: 16px; height: 16px; fill: none; stroke: #fff; }
.tray svg:last-child { stroke: none; margin-left: 7px; }
.tray .kb { width: 24px; margin: 0 2px; }
.clock { width: 64px; }
.notes { width: 58px; height: 40px; background: #000; display: grid; place-items: center; }
.notes svg { width: 28px; height: 28px; }

.ime { position: absolute; left: 702px; top: 3px; width: 206px; height: 24px; display: flex; align-items: center; justify-content: space-between; padding-right: 3px; background: #fff; border: 1px solid #a9c0d6; }
.ime svg { width: 16px; height: 16px; fill: #1d77c9; }
.ime .pale { fill: #aac4df; }
.ime .logo { width: 28px; height: 28px; margin-left: -2px; margin-top: -3px; }
.ime b { font-size: 14px; color: #1d77c9; }
.ball { position: absolute; left: 1041px; top: -29px; width: 48px; height: 48px; border-radius: 50%; background: #3fc45c; border: 2px solid #eee; box-shadow: 0 1px 6px #888, inset 0 0 0 1px #2a9a45; color: #fff; font-weight: bold; text-align: center; padding-top: 26px; }

.dialog { position: absolute; left: 260px; top: 199px; width: 411px; background: #f0f0f0; border: 1px solid #338de0; box-shadow: 0 3px 14px rgba(0, 0, 0, .45); }
.dialog header { height: 25px; background: #fff; display: flex; align-items: center; padding: 0 9px 0 3px; }
.dialog header h2 { flex: 1; }
.dialog header svg { width: 12px; height: 12px; }
.fields { padding: 14px 13px 8px 13px; display: flex; flex-direction: column; gap: 7px; }
fieldset { margin: 0; padding: 0 9px 6px 7px; border: 1px solid #dcdcdc; min-width: 0; }
legend { padding: 0; }
textarea { display: block; width: 100%; height: 41px; border: 1px solid #777; border-radius: 0; resize: none; outline: 0; padding: 1px 2px; background: #fff; font: 10px/16px "Liberation Mono", monospace; }
textarea.focus { border-color: #4f7898; }
textarea::selection { background: #0078d7; color: #fff; }
.actions { display: flex; justify-content: end; gap: 15px; padding: 5px 1px 0 0; }
.actions button { width: 72px; height: 23px; background: #e1e1e1; border: 1px solid #adadad; }

.mark { position: absolute; border: 7px solid #f00; pointer-events: none; }
.mark-tool { left: 414px; top: 108px; width: 121px; height: 65px; }
.mark-title { left: 231px; top: 171px; width: 112px; height: 67px; }
```

FILE: app.js
```js
const field = document.getElementById("hgap");
field.focus();
field.select();
```
